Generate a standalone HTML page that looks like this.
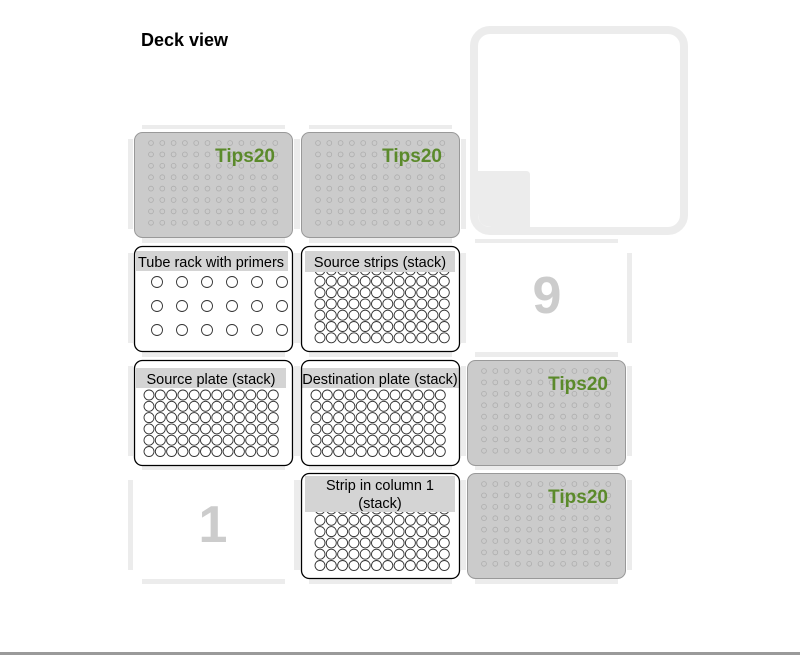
<!DOCTYPE html>
<html><head><meta charset="utf-8"><style>
html,body{margin:0;padding:0;background:#fff;width:800px;height:655px;overflow:hidden}
svg{display:block;font-family:"Liberation Sans",sans-serif}
</style></head><body>
<svg id="s" width="800" height="655" viewBox="0 0 800 655" xmlns="http://www.w3.org/2000/svg">
<rect x="0" y="0" width="800" height="652" rx="8" fill="#fff"/>
<rect x="0" y="652" width="800" height="3" fill="#9a9a9a"/>
<text x="141" y="46" font-size="18" font-weight="bold" fill="#000">Deck view</text>
<g id="bars" fill="#ececec"></g>
<rect x="474" y="30" width="210" height="201" rx="16" fill="none" stroke="#ececec" stroke-width="8"/>
<path d="M478 171 H526 Q530 171 530 175 V227 H492 Q478 227 478 213 Z" fill="#ececec"/>
<text x="547" y="313" font-size="52" font-weight="bold" fill="#cccccc" text-anchor="middle">9</text>
<text x="213" y="542" font-size="52" font-weight="bold" fill="#cccccc" text-anchor="middle">1</text>
<g id="lw"></g>
</svg>
<script>
var NS="http://www.w3.org/2000/svg";
function el(p,t,a,txt){var e=document.createElementNS(NS,t);for(var k in a)e.setAttribute(k,a[k]);if(txt)e.textContent=txt;p.appendChild(e);return e;}
var bars=document.getElementById('bars'),lw=document.getElementById('lw');
var cx=[128,295,461],ry=[125,239,352,466];
for(var c=0;c<3;c++)for(var r=0;r<4;r++){
 if(c==2&&r==0)continue;
 var x=cx[c],y=ry[r];
 el(bars,'rect',{x:x+14,y:y,width:143,height:4});
 el(bars,'rect',{x:x+14,y:y+113,width:143,height:5});
 el(bars,'rect',{x:x,y:y+14,width:5,height:90});
 el(bars,'rect',{x:x+166,y:y+14,width:5,height:90});
}
var lx=[134,301,467],ly=[132,246,360,473];
function tips(c,r){
 var x=lx[c],y=ly[r];
 var g=el(lw,'g',{});
 el(g,'rect',{x:x+0.5,y:y+0.5,width:158,height:105,rx:8,fill:'#cbcbcb',stroke:'#999','stroke-width':1});
 for(var i=0;i<12;i++)for(var j=0;j<8;j++)
  el(g,'circle',{cx:x+17+i*11.3,cy:y+11+j*11.4,r:2.4,fill:'none',stroke:'#adadad','stroke-width':0.8});
 el(g,'text',{x:x+141,y:y+30,'font-size':19,'font-weight':'bold',fill:'#5b8a2b','text-anchor':'end'},'Tips20');
}
function plate(c,r,label,x0,y0,rows,hb,lines){
 var x=lx[c],y=ly[r];
 var g=el(lw,'g',{});
 var cp='cp'+c+r;
 var d=el(g,'clipPath',{id:cp});el(d,'rect',{x:x,y:y,width:159,height:106,rx:8});
 el(g,'rect',{x:x+0.5,y:y+0.5,width:158,height:105,rx:8,fill:'#fff'});
 var gg=el(g,'g',{'clip-path':'url(#'+cp+')'});
 for(var i=0;i<12;i++)for(var j=0;j<rows;j++)
  el(gg,'circle',{cx:x0+i*11.3,cy:y0+j*11.3,r:5,fill:'none',stroke:'#333','stroke-width':0.9});
 el(gg,'rect',{x:hb[0],y:hb[1],width:hb[2],height:hb[3],fill:'#d4d4d4'});
 for(var k=0;k<lines.length;k++)
  el(gg,'text',{x:hb[0]+hb[2]/2,y:lines[k][1],'font-size':14.5,fill:'#000','text-anchor':'middle'},lines[k][0]);
 el(g,'rect',{x:x+0.5,y:y+0.5,width:158,height:105,rx:8,fill:'none',stroke:'#000','stroke-width':1.3});
}
tips(0,0);tips(1,0);tips(2,2);tips(2,3);
(function(){
 var x=lx[0],y=ly[1];var g=el(lw,'g',{});
 el(g,'rect',{x:x+0.5,y:y+0.5,width:158,height:105,rx:8,fill:'#fff',stroke:'#000','stroke-width':1.3});
 el(g,'rect',{x:x+2,y:y+5,width:152,height:20,fill:'#d4d4d4'});
 el(g,'text',{x:x+77,y:y+21,'font-size':14.5,'text-anchor':'middle'},'Tube rack with primers');
 for(var i=0;i<6;i++)for(var j=0;j<3;j++)
  el(g,'circle',{cx:157+i*25,cy:282+j*24,r:5.5,fill:'none',stroke:'#333','stroke-width':0.9});
})();
plate(1,1,'',320,270,7,[305,251,150,21],[['Source strips (stack)',267]]);
plate(0,2,'',149,395,6,[136,368,150,20],[['Source plate (stack)',384]]);
plate(1,2,'',316,395,6,[301,368,158,20],[['Destination plate (stack)',384]]);
plate(1,3,'',320,509,6,[305,476,150,36],[['Strip in column 1',490],['(stack)',508]]);
</script>
</body></html>
